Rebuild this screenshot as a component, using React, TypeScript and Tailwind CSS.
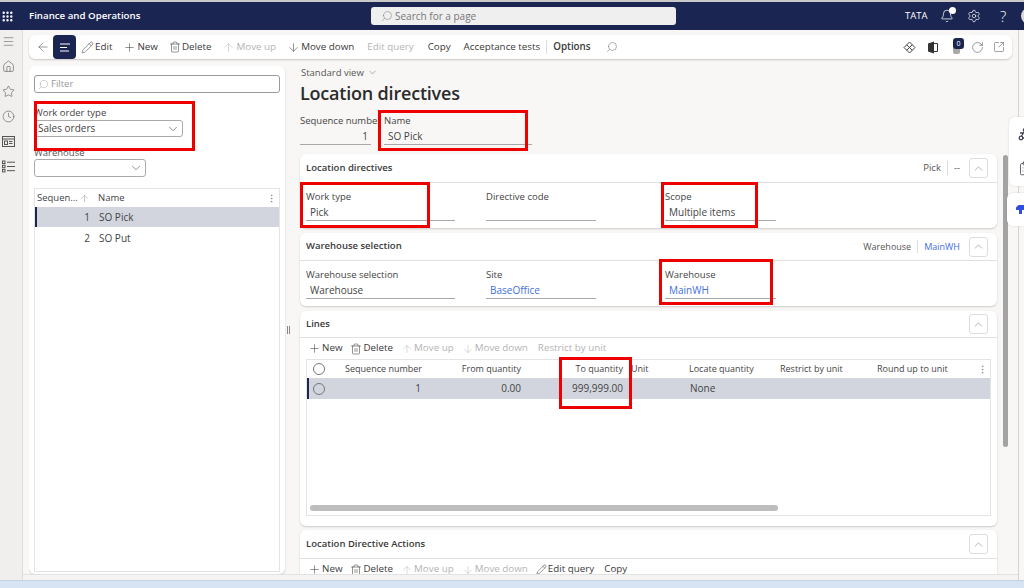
import { ArrowDown, ArrowLeft, ArrowUp, ChevronDown, ChevronUp, ClipboardList, Clock, EllipsisVertical, Grip, Home, Menu, Pencil, Plus, RotateCw, Search, Settings, Star, Trash2, Bell, SquareArrowOutUpRight } from 'lucide-react';
import type { ReactNode } from 'react';

const RedBox = ({ className }: { className: string }) => (
  <div className={`absolute border-[3px] border-[#ee0000] pointer-events-none ${className}`} />
);

const Field = ({ label, value, width, link, right }: { label: string; value: string; width: string; link?: boolean; right?: boolean }) => (
  <div className={`flex flex-col ${width}`}>
    <span className="text-[9.5px] leading-[13px] text-[#444] whitespace-nowrap">{label}</span>
    <div className={`h-[17px] mt-[1px] border-b border-[#a8a8a8] flex items-center text-[10px] ${right ? 'justify-end pr-[3px]' : 'pl-[4px]'} ${link ? 'text-[#3f6fdc]' : 'text-[#444]'}`}>
      {value}
    </div>
  </div>
);

const Tool = ({ icon, label, disabled, bold }: { icon?: ReactNode; label: string; disabled?: boolean; bold?: boolean }) => (
  <span className={`flex items-center gap-[1px] whitespace-nowrap text-[9.8px] ${disabled ? 'text-[#b4b4b4]' : 'text-[#3a3a3a]'} ${bold ? 'font-semibold' : ''}`}>
    {icon}
    {label}
  </span>
);

const CollapseBtn = () => (
  <div className="w-[19px] h-[20px] border border-[#ddd] rounded-[3px] flex items-center justify-center bg-white">
    <ChevronUp size={13} strokeWidth={1} className="text-[#777]" />
  </div>
);

const CardHeader = ({ title, height, children }: { title: string; height: string; children?: ReactNode }) => (
  <div className={`${height} pl-[6px] pr-[9px] flex items-center justify-between border-b border-[#e0e0e0] shrink-0`}>
    <span className="text-[9.5px] font-semibold text-[#3a3a3a]">{title}</span>
    <div className="flex items-center">{children}</div>
  </div>
);

const Card = ({ className, children }: { className: string; children: ReactNode }) => (
  <section className={`bg-white rounded-[6px] shadow-[0_1px_2px_rgba(0,0,0,0.18)] flex flex-col shrink-0 ${className}`}>{children}</section>
);

const LineTools = ({ editQuery }: { editQuery?: boolean }) => (
  <div className="flex items-center gap-[8px] h-[21px] px-[8px] shrink-0">
    <Tool icon={<Plus size={13} strokeWidth={1} />} label="New" />
    <Tool icon={<Trash2 size={12} strokeWidth={1.1} />} label="Delete" />
    <Tool disabled icon={<ArrowUp size={12} strokeWidth={1} />} label="Move up" />
    <Tool disabled icon={<ArrowDown size={12} strokeWidth={1} />} label="Move down" />
    {editQuery ? (
      <>
        <Tool icon={<Pencil size={11} strokeWidth={1.1} />} label="Edit query" />
        <span className="ml-[2px]"><Tool label="Copy" /></span>
      </>
    ) : (
      <span className="ml-[2px]"><Tool disabled label="Restrict by unit" /></span>
    )}
  </div>
);

const Radio = () => <span className="w-[12px] h-[12px] rounded-full border border-[#777] block" />;

export default function App() {
  return (
    <div className="w-[1024px] h-[588px] overflow-hidden relative flex flex-col bg-[#f8f7f6] font-['Open_Sans',sans-serif]">
      {/* top bar */}
      <header className="h-[30px] shrink-0 bg-[#1a2552] border-t-[2px] border-[#c9c9c9] flex items-center text-white overflow-hidden">
        <div className="w-[15px] flex justify-center shrink-0">
          <Grip size={13} strokeWidth={2.5} />
        </div>
        <span className="w-[111px] ml-[14px] shrink-0 text-[9.7px] font-semibold whitespace-nowrap">Finance and Operations</span>
        <div className="ml-[231px] w-[305px] h-[18px] shrink-0 bg-[#efefef] rounded-[3px] flex items-center pl-[10px] gap-[2px] text-[10px] text-[#777]">
          <Search size={12} strokeWidth={1} className="-scale-x-100" />
          Search for a page
        </div>
        <span className="ml-[229px] w-[22px] shrink-0 text-[9.5px] whitespace-nowrap">TATA</span>
        <span className="relative ml-[13px] shrink-0">
          <Bell size={14} strokeWidth={1.3} />
          <span className="absolute -top-[2px] -right-[2px] w-[7px] h-[7px] rounded-full bg-white" />
        </span>
        <Settings size={14} strokeWidth={1.2} className="ml-[13px] shrink-0" />
        <span className="ml-[19px] w-[8px] shrink-0 text-[15px] font-light leading-none">?</span>
        <span className="ml-[13px] w-[16px] h-[16px] shrink-0 rounded-full bg-[#d8d8d8]" />
      </header>

      <div className="flex-1 flex min-h-0">
        {/* left rail */}
        <nav className="w-[23px] shrink-0 bg-[#f0efee] border-r border-[#dedede] flex flex-col items-start pl-[2px] pt-[5px] gap-[12px] text-[#555]">
          <Menu size={13} strokeWidth={1} />
          <Home size={13} strokeWidth={1.1} />
          <Star size={13} strokeWidth={1.1} />
          <Clock size={13} strokeWidth={1.1} />
          <svg width="13" height="13" viewBox="0 0 13 13" fill="none" stroke="currentColor"><rect x="0.5" y="1.5" width="12" height="10" /><path d="M0.5 4h12" /><rect x="2.5" y="6" width="3" height="3.5" /><path d="M7 6.5h3.5M7 8.5h3.5" /></svg>
          <svg width="13" height="13" viewBox="0 0 13 13" fill="none" stroke="currentColor"><rect x="0.5" y="1" width="2.5" height="2.5" /><rect x="0.5" y="5.2" width="2.5" height="2.5" /><rect x="0.5" y="9.4" width="2.5" height="2.5" /><path d="M5 2.2h8M5 6.5h8M5 10.7h8" /></svg>
        </nav>

        <div className="w-[995px] shrink-0 flex flex-col pl-[6px] pt-[5px]">
          {/* action pane */}
          <div className="h-[24px] w-[983px] shrink-0 bg-white rounded-[6px] shadow-[0_1px_2px_rgba(0,0,0,0.2)] flex items-center pl-[7px] pr-[7px]">
            <ArrowLeft size={14} strokeWidth={1} className="text-[#555]" />
            <div className="ml-[3px] w-[23px] h-[24px] bg-[#1a2552] rounded-[4px] flex items-center justify-center text-white">
              <svg width="12" height="9" viewBox="0 0 12 9" fill="none" stroke="currentColor" strokeWidth="1"><path d="M1 1h10M1 4.5h7M1 8h9" /></svg>
            </div>
            <div className="ml-[5px] flex items-center gap-[11px]">
              <Tool icon={<Pencil size={13} strokeWidth={1} />} label="Edit" />
              <Tool icon={<Plus size={13} strokeWidth={1} />} label="New" />
              <Tool icon={<Trash2 size={12} strokeWidth={1.1} />} label="Delete" />
              <Tool disabled icon={<ArrowUp size={13} strokeWidth={1} />} label="Move up" />
              <Tool icon={<ArrowDown size={13} strokeWidth={1} />} label="Move down" />
              <span className="ml-[2px]"><Tool disabled label="Edit query" /></span>
              <span className="ml-[3px]"><Tool label="Copy" /></span>
              <span className="ml-[2px] pr-[6px] border-r border-[#ddd]"><Tool label="Acceptance tests" /></span>
              <span className="-ml-[5px]"><Tool bold label="Options" /></span>
              <Search size={12} strokeWidth={1} className="ml-[4px] -scale-x-100 text-[#666]" />
            </div>
            <div className="ml-auto flex items-center text-[#444]">
              <svg width="13" height="13" viewBox="0 0 13 13" fill="none" stroke="currentColor" strokeWidth="1"><path d="M6.5 1 12 6.5 6.5 12 1 6.5z" /><path d="M3.7 3.8 9.2 9.2M9.2 3.8 3.7 9.2" /></svg>
              <svg className="ml-[12px]" width="10" height="13" viewBox="0 0 10 13"><path d="M0 2.5 6 0.5v12L0 10.5z" fill="#333" /><path d="M6 2.5h3.5v8H6" fill="none" stroke="#333" /></svg>
              <span className="ml-[15px] relative w-[11px] h-[13px]">
                <span className="absolute top-[5px] left-0 w-[7px] h-[8px] rounded-[2px] bg-[#a8a8a8]" />
                <span className="absolute -top-[3px] left-0 w-[11px] h-[11px] rounded-[3px] bg-[#1a2552] text-white text-[7px] leading-[11px] text-center">0</span>
              </span>
              <RotateCw size={13} strokeWidth={1} className="ml-[7px]" />
              <SquareArrowOutUpRight size={12} strokeWidth={1} className="ml-[9px]" />
            </div>
          </div>

          <div className="h-[508px] overflow-hidden shrink-0 flex mt-[7px]">
            {/* filter pane */}
            <aside className="w-[256px] h-[508px] shrink-0 bg-white rounded-[6px] shadow-[0_1px_2px_rgba(0,0,0,0.18)] px-[5px] pt-[9px] flex flex-col">
              <div className="h-[18px] shrink-0 border border-[#999] rounded-[3px] flex items-center pl-[3px] gap-[2px] text-[9.5px] text-[#999]">
                <Search size={11} strokeWidth={1} className="-scale-x-100" />
                Filter
              </div>
              <span className="mt-[13px] text-[9.5px] leading-[13px] text-[#444]">Work order type</span>
              <div className="mt-[1px] w-[149px] h-[17px] shrink-0 border border-[#aaa] rounded-[3px] flex items-center justify-between pl-[3px] pr-[2px] text-[10px] text-[#444]">
                Sales orders
                <ChevronDown size={14} strokeWidth={1} />
              </div>
              <span className="mt-[9px] text-[9.5px] leading-[13px] text-[#555]">Warehouse</span>
              <div className="w-[112px] h-[18px] shrink-0 border border-[#aaa] rounded-[3px] flex items-center justify-end pr-[2px]">
                <ChevronDown size={14} strokeWidth={1} className="text-[#444]" />
              </div>
              <div className="mt-[11px] flex-1 mb-[2px] border border-[#e4e4e4] flex flex-col">
                <div className="h-[18px] flex items-center text-[9.5px] text-[#444] shrink-0">
                  <span className="w-[55px] pl-[2px] flex items-center justify-between">
                    Sequen...
                    <ArrowUp size={11} strokeWidth={1} className="text-[#888]" />
                  </span>
                  <span className="ml-[8px]">Name</span>
                  <EllipsisVertical size={11} strokeWidth={1} className="ml-auto mr-[2px] text-[#666]" />
                </div>
                <div className="h-[20px] bg-[#d2d5de] border-l-[2px] border-[#1a2552] flex items-center text-[10px] text-[#444]">
                  <span className="w-[53px] text-right">1</span>
                  <span className="ml-[9px]">SO Pick</span>
                </div>
                <div className="h-[22px] pl-[2px] flex items-center text-[10px] text-[#444]">
                  <span className="w-[53px] text-right">2</span>
                  <span className="ml-[9px]">SO Put</span>
                </div>
              </div>
            </aside>

            {/* splitter */}
            <div className="w-[15px] shrink-0 flex items-center pl-[2px] pt-[20px]">
              <span className="w-[3px] h-[8px] border-x border-[#888]" />
            </div>

            {/* main form */}
            <main className="w-[697px] shrink-0 flex flex-col">
              <div className="flex items-center gap-[3px] text-[9.5px] text-[#555] leading-[13px] pl-[1px]">
                Standard view <ChevronDown size={11} strokeWidth={1} />
              </div>
              <h1 className="text-[18px] font-semibold leading-[25px] text-[#2b2b2b] mt-[2px] tracking-[-0.2px]">Location directives</h1>
              <div className="flex gap-[13px] mt-[8px]">
                <Field label="Sequence number" value="1" width="w-[71px]" right />
                <Field label="Name" value="SO Pick" width="w-[148px]" />
              </div>

              <Card className="mt-[9px] h-[74px]">
                <CardHeader title="Location directives" height="h-[29px]">
                  <span className="text-[9.5px] text-[#555] pr-[6px] border-r border-[#ddd]">Pick</span>
                  <span className="text-[9.5px] text-[#555] ml-[6px] mr-[9px]">--</span>
                  <CollapseBtn />
                </CardHeader>
                <div className="flex px-[6px] pt-[7px]">
                  <Field label="Work type" value="Pick" width="w-[149px]" />
                  <Field label="Directive code" value="" width="w-[110px] ml-[31px]" />
                  <Field label="Scope" value="Multiple items" width="w-[111px] ml-[69px]" />
                </div>
              </Card>

              <Card className="mt-[5px] h-[73px]">
                <CardHeader title="Warehouse selection" height="h-[28px]">
                  <span className="text-[9px] text-[#555] pr-[6px] border-r border-[#ddd]">Warehouse</span>
                  <span className="text-[9px] text-[#3f6fdc] ml-[6px] mr-[9px]">MainWH</span>
                  <CollapseBtn />
                </CardHeader>
                <div className="flex px-[6px] pt-[7px]">
                  <Field label="Warehouse selection" value="Warehouse" width="w-[149px]" />
                  <Field label="Site" value="BaseOffice" width="w-[110px] ml-[31px]" link />
                  <Field label="Warehouse" value="MainWH" width="w-[111px] ml-[69px]" link />
                </div>
              </Card>

              <Card className="mt-[5px] h-[215px]">
                <CardHeader title="Lines" height="h-[27px]"><CollapseBtn /></CardHeader>
                <LineTools />
                <div className="mx-[6px] h-[157px] border border-[#e4e4e4] flex flex-col">
                  <div className="h-[18px] flex items-center text-[9px] font-medium text-[#444] shrink-0 whitespace-nowrap">
                    <span className="w-[24px] pl-[6px]"><Radio /></span>
                    <span className="w-[91px] text-right">Sequence number</span>
                    <span className="w-[99px] text-right">From quantity</span>
                    <span className="w-[102px] text-right">To quantity</span>
                    <span className="ml-[8px] w-[58px]">Unit</span>
                    <span className="w-[91px]">Locate quantity</span>
                    <span className="w-[97px]">Restrict by unit</span>
                    <span>Round up to unit</span>
                    <EllipsisVertical size={11} strokeWidth={1} className="ml-auto mr-[2px] text-[#666]" />
                  </div>
                  <div className="h-[21px] bg-[#d2d5de] border-l-[2px] border-[#1a2552] flex items-center text-[10px] text-[#444]">
                    <span className="w-[22px] pl-[4px]"><Radio /></span>
                    <span className="w-[90px] text-right">1</span>
                    <span className="w-[100px] text-right">0.00</span>
                    <span className="w-[102px] text-right">999,999.00</span>
                    <span className="ml-[67px]">None</span>
                  </div>
                  <div className="mt-auto mb-[4px] ml-[3px] w-[468px] h-[6px] rounded-full bg-[#bdbdbd]" />
                </div>
              </Card>

              <Card className="mt-[4px] h-[60px]">
                <CardHeader title="Location Directive Actions" height="h-[29px]"><CollapseBtn /></CardHeader>
                <LineTools editQuery />
              </Card>
            </main>

            {/* page scrollbar */}
            <div className="ml-[6px] w-[5px] h-[292px] mt-[89px] bg-[#a3a3a3] rounded-full shrink-0" />
          </div>
          <div className="flex-1 border-t border-[#e2e2e2] -ml-[6px] bg-[#f5f4f3]" />
        </div>

        <div className="flex-1 border-l border-[#d4d4d4]" />
      </div>

      {/* window edge at the bottom */}
      <div className="h-[8px] shrink-0 bg-[#d6e4f3] border-t border-[#c4d3e4]" />

      {/* side tabs */}
      <div className="absolute right-0 top-[117px] w-[15px] h-[69px] bg-white rounded-l-[6px] shadow-[0_0_2px_rgba(0,0,0,0.15)] flex flex-col justify-around pl-[9px] overflow-hidden text-[#445]">
        <svg className="shrink-0" width="14" height="15" viewBox="0 0 14 15" fill="none" stroke="currentColor" strokeWidth="1.3"><circle cx="7" cy="3" r="1.6" /><circle cx="3" cy="11" r="1.8" /><path d="M6 5 3.5 9M5 11h8M2 6h3" /></svg>
        <ClipboardList size={15} strokeWidth={1.3} className="shrink-0" />
      </div>
      <div className="absolute right-0 top-[193px] w-[17px] h-[33px] bg-white rounded-l-[6px] shadow-[0_0_2px_rgba(0,0,0,0.15)] flex items-center pl-[9px] overflow-hidden">
        <svg className="shrink-0" width="12" height="9" viewBox="0 0 12 9" fill="#2f4fe0"><path d="M0 2.5 2.5 0H12v5H6v4H3V5H0z" /></svg>
      </div>

      {/* red annotation boxes */}
      <RedBox className="left-[34px] top-[101px] w-[161px] h-[50px]" />
      <RedBox className="left-[378px] top-[110px] w-[150px] h-[41px]" />
      <RedBox className="left-[300px] top-[182px] w-[130px] h-[46px]" />
      <RedBox className="left-[661px] top-[182px] w-[97px] h-[46px]" />
      <RedBox className="left-[659px] top-[259px] w-[114px] h-[46px]" />
      <RedBox className="left-[559px] top-[357px] w-[73px] h-[52px]" />
    </div>
  );
}
